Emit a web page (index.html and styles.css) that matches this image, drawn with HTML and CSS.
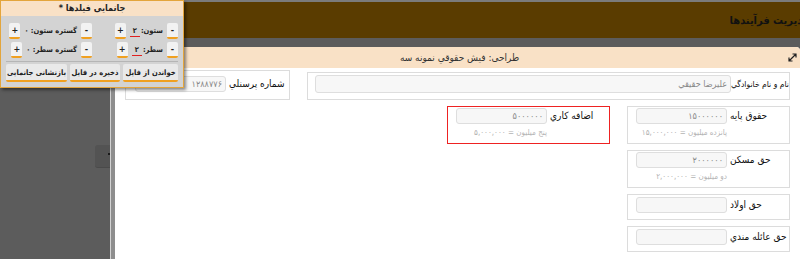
FILE: index.html
```html
<!DOCTYPE html>
<html lang="fa">
<head>
<meta charset="UTF-8">
<meta name="viewport" content="width=device-width, initial-scale=1.0">
<link rel="stylesheet" href="styles.css">
</head>
<body>
<div class="page">
    <div class="topline"></div>
    <div class="appbar">
        <span class="appbar-title">مدیریت فرآیندها</span>
    </div>

    <div class="main">
        <div class="sidebar">
            <div class="handle"><span class="dot"></span></div>
        </div>

        <div class="dialog">
            <div class="dialog-head">
                <span class="dialog-title">طراحی: فیش حقوقي نمونه سه</span>
                <svg class="expand" width="9" height="9" viewBox="0 0 9 9">
                    <path d="M1 8L8 1M4.5 1H8V4.5M1 4.5V8H4.5" fill="none" stroke="#222" stroke-width="1.2"/>
                </svg>
            </div>
            <div class="dialog-body">
                <div class="strip"></div>
                <div class="canvas">
                    <div class="row row-top">
                        <div class="field field-name">
                            <div class="field-row">
                                <label>نام و نام خانوادگي</label>
                                <div class="control"><input class="inp inp-tall" value="عليرضا حقيقي" readonly></div>
                            </div>
                        </div>
                        <div class="field field-code">
                            <div class="field-row">
                                <label>شماره پرسنلي</label>
                                <div class="control"><input class="inp" value="۱۲۸۸۷۷۶" readonly></div>
                            </div>
                        </div>
                    </div>

                    <div class="row">
                        <div class="column">
                            <div class="field">
                                <div class="field-row">
                                    <label>حقوق پايه</label>
                                    <div class="control">
                                        <input class="inp" value="۱۵۰۰۰۰۰۰" readonly>
                                        <div class="hint">پانزده ميليون = ۱۵,۰۰۰,۰۰۰</div>
                                    </div>
                                </div>
                            </div>
                            <div class="field">
                                <div class="field-row">
                                    <label>حق مسکن</label>
                                    <div class="control">
                                        <input class="inp" value="۲۰۰۰۰۰۰" readonly>
                                        <div class="hint">دو ميليون = ۲,۰۰۰,۰۰۰</div>
                                    </div>
                                </div>
                            </div>
                            <div class="field field-empty">
                                <div class="field-row">
                                    <label>حق اولاد</label>
                                    <div class="control"><input class="inp" value="" readonly></div>
                                </div>
                            </div>
                            <div class="field field-empty">
                                <div class="field-row">
                                    <label>حق عائله مندي</label>
                                    <div class="control"><input class="inp" value="" readonly></div>
                                </div>
                            </div>
                        </div>

                        <div class="field field-selected">
                            <div class="field-row">
                                <label>اضافه کاري</label>
                                <div class="control">
                                    <input class="inp" value="۵۰۰۰۰۰۰" readonly>
                                    <div class="hint">پنج ميليون = ۵,۰۰۰,۰۰۰</div>
                                </div>
                            </div>
                        </div>
                    </div>
                </div>
            </div>
        </div>
    </div>

    <div class="panel">
        <div class="panel-head">جانمایی فیلدها *</div>
        <div class="panel-grid">
            <div class="group">
                <button class="mini">-</button>
                <span class="glabel">ستون:<span class="num">۲</span></span>
                <button class="mini">+</button>
            </div>
            <div class="group">
                <button class="mini">-</button>
                <span class="glabel">گستره ستون: ۰</span>
                <button class="mini">+</button>
            </div>
            <div class="group">
                <button class="mini">-</button>
                <span class="glabel">سطر:<span class="num">۲</span></span>
                <button class="mini">+</button>
            </div>
            <div class="group">
                <button class="mini">-</button>
                <span class="glabel">گستره سطر: ۰</span>
                <button class="mini">+</button>
            </div>
        </div>
        <div class="panel-sep"></div>
        <div class="panel-actions">
            <button class="act act-load">خواندن از فایل</button>
            <button class="act act-save">ذخیره در فایل</button>
            <button class="act act-reset">بازنشانی جانمایی</button>
        </div>
    </div>
</div>
</body>
</html>
```

FILE: styles.css
```css
body {
  margin: 0;
  font-family: "DejaVu Sans Condensed", "DejaVu Sans", sans-serif;
  font-stretch: condensed;
  font-size: 10px;
  color: #222;
}

.page {
  position: relative;
  width: 800px;
  height: 259px;
  overflow: hidden;
  background-color: #5c5c5c;
}

.topline {
  height: 2px;
  background-color: #7b7b7b;
}

.appbar {
  height: 36px;
  background-color: #5a3c00;
  direction: rtl;
  display: flex;
  align-items: center;
}

.appbar-title {
  margin-right: -9px;
  font-size: 11px;
  font-weight: bold;
  color: #111;
}

.main {
  display: flex;
  padding-top: 9px;
  height: 212px;
}

.sidebar {
  width: 110px;
  flex-shrink: 0;
  display: flex;
  flex-direction: column;
  align-items: flex-end;
}

.handle {
  margin-top: 98px;
  width: 15px;
  height: 23px;
  background-color: #535353;
  border-radius: 3px 0 0 3px;
  border-bottom: 1px solid #4a4a4a;
  display: flex;
  justify-content: flex-end;
  padding-top: 8px;
  box-sizing: border-box;
}

.dot {
  width: 2px;
  height: 2px;
  background-color: #1a1a1a;
}

.dialog {
  flex: 1;
  display: flex;
  flex-direction: column;
  border-left: 1px solid #d2d2d2;
  background-color: #fff;
  border-top-right-radius: 4px;
}

.dialog-head {
  height: 21px;
  background-color: #f9e1c6;
  border-top-right-radius: 4px;
  display: flex;
  align-items: center;
  padding: 0 3px 0 20px;
}

.dialog-title {
  flex: 1;
  text-align: center;
  direction: rtl;
  color: #333;
}

.dialog-body {
  flex: 1;
  display: flex;
}

.strip {
  width: 4px;
  background-color: #8e8e8e;
}

.canvas {
  flex: 1;
  direction: rtl;
  display: flex;
  flex-direction: column;
  gap: 6px;
  padding: 2px 10px 0 0;
}

.row {
  display: flex;
  gap: 17px;
  align-items: flex-start;
}

.row-top {
  align-items: flex-end;
}

.column {
  display: flex;
  flex-direction: column;
  gap: 6px;
}

.field {
  width: 163px;
  box-sizing: border-box;
  border: 1px solid #dcdcdc;
  background-color: #fff;
  padding: 1px 0 4px 8px;
}

.field-empty {
  padding: 2px 0 6px 8px;
}

.field-name {
  width: 483px;
  padding: 2px 0 6px 7px;
}

.field-code {
  width: 165px;
  padding: 5px 0 7px 9px;
}

.field-selected {
  border: 1.5px solid #ee2222;
}

.field-row {
  display: flex;
  align-items: flex-start;
}

.field-row label {
  flex: 1;
  min-width: 0;
  text-align: left;
  padding-left: 3px;
  line-height: 16px;
  font-size: 10px;
  white-space: nowrap;
  color: #111;
}

.field-name label {
  line-height: 18px;
  font-size: 8.5px;
  padding-left: 2px;
}

.control {
  width: 91px;
  flex-shrink: 0;
}

.field-name .control {
  width: 416px;
}

.inp {
  display: block;
  width: 100%;
  height: 16px;
  box-sizing: border-box;
  margin: 0;
  padding: 0 3px;
  border: 1px solid #dedede;
  border-radius: 3px;
  background-color: #f7f7f7;
  font-family: "DejaVu Sans Condensed", "DejaVu Sans", sans-serif;
  font-stretch: condensed;
  font-size: 9px;
  color: #888;
  direction: rtl;
  text-align: right;
}

.inp-tall {
  height: 18px;
}

.hint {
  margin-top: 3px;
  line-height: 12px;
  font-size: 8px;
  color: #b4b4b4;
  white-space: nowrap;
  text-align: right;
}

/* layout panel */

.panel {
  position: absolute;
  top: 0;
  left: 0;
  width: 184px;
  height: 88px;
  box-sizing: border-box;
  border: 1px solid #e3a53c;
  background-color: #d3d3d3;
  box-shadow: 2px 2px 3px rgba(0,0,0,0.45);
  direction: rtl;
}

.panel-head {
  height: 15px;
  line-height: 15px;
  background-color: #f9e1c6;
  text-align: center;
  font-weight: bold;
  font-size: 9px;
}

.panel-grid {
  display: grid;
  grid-template-columns: 86px 1fr;
  row-gap: 2px;
  padding: 6px 5px 0 5px;
}

.group {
  display: flex;
  align-items: center;
  gap: 2px;
  height: 17px;
}

.glabel {
  font-weight: bold;
  font-size: 7.5px;
  white-space: nowrap;
  margin: 0 2px;
}

.num {
  display: inline-block;
  border-bottom: 1px solid #e02020;
  padding: 0 3px;
  margin-right: 1px;
  line-height: 11px;
}

button {
  font-family: "DejaVu Sans Condensed", "DejaVu Sans", sans-serif;
  font-stretch: condensed;
  color: #222;
  cursor: pointer;
}

.mini {
  width: 11px;
  height: 16px;
  padding: 0;
  border: none;
  border-bottom: 2px solid #f0a020;
  border-radius: 2px;
  background-color: #f2f2f2;
  font-size: 9px;
  font-weight: bold;
}

.panel-sep {
  margin: 3px 5px 0 5px;
  border-top: 1px solid #b5b5b5;
}

.panel-actions {
  display: flex;
  gap: 3px;
  padding: 2px 5px 0 5px;
}

.act {
  height: 18px;
  padding: 0;
  border: none;
  border-bottom: 2px solid #f0a020;
  border-radius: 2px;
  background-color: #e9e9e9;
  font-size: 7.5px;
  font-weight: bold;
  white-space: nowrap;
}

.act-load {
  width: 55px;
}

.act-save {
  width: 50px;
}

.act-reset {
  width: 61px;
}
```
